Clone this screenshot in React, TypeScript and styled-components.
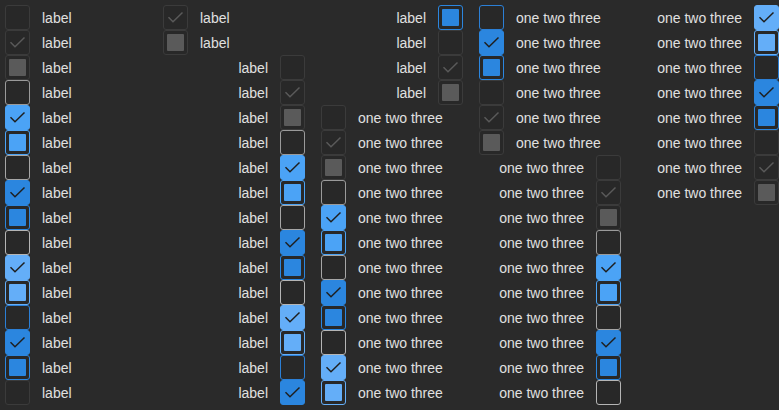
import React from "react";
import styled, { createGlobalStyle } from "styled-components";

const GlobalStyle = createGlobalStyle`
  html, body {
    margin: 0;
    padding: 0;
    background: #2a2a2a;
    overflow: hidden;
  }
`;

type Variant = "disabled" | "normal" | "hover" | "active" | "focus";
type State = "unchecked" | "checked" | "indeterminate";

const palette: Record<Variant, { border: string; fill: string; mark: string }> = {
  disabled: { border: "#3b3b3b", fill: "transparent", mark: "#5a5a5a" },
  normal: { border: "#9a9a9a", fill: "#4ba3f6", mark: "#1f1f1f" },
  hover: { border: "#a6a6a6", fill: "#2b86df", mark: "#1f1f1f" },
  active: { border: "#b5b5b5", fill: "#64aef8", mark: "#1f1f1f" },
  focus: { border: "#2b7fd6", fill: "#2b86df", mark: "#1f1f1f" },
};

const Grid = styled.div`
  display: flex;
  flex-direction: column;
  flex-wrap: wrap;
  align-content: flex-start;
  height: 400px;
  padding: 5px;
  column-gap: 16px;
  font-family: "Liberation Sans", Arial, sans-serif;
  font-size: 14px;
  color: #e0e0e0;
`;

const Item = styled.label<{ $reverse: boolean }>`
  display: flex;
  flex-direction: ${(p) => (p.$reverse ? "row-reverse" : "row")};
  align-items: center;
  gap: 12px;
  width: 142px;
  height: 25px;
`;

const Box = styled.span<{ $variant: Variant; $state: State }>`
  box-sizing: border-box;
  flex: none;
  width: 25px;
  height: 25px;
  border-radius: 3px;
  display: flex;
  align-items: center;
  justify-content: center;
  border: 1px solid
    ${(p) => {
      const c = palette[p.$variant];
      if (p.$variant === "disabled") return c.border;
      if (p.$state === "unchecked") return c.border;
      return c.fill;
    }};
  background: ${(p) =>
    p.$variant !== "disabled" && p.$state === "checked"
      ? palette[p.$variant].fill
      : "#282828"};
`;

const Square = styled.span<{ $color: string }>`
  width: 17px;
  height: 17px;
  border-radius: 1px;
  background: ${(p) => p.$color};
`;

const Text = styled.span`
  white-space: nowrap;
  line-height: 25px;
  padding-top: 2px;
`;

const Check = ({ color }: { color: string }) => (
  <svg width="25" height="25" viewBox="0 0 25 25" style={{ margin: -1 }}>
    <path
      d="M5.5 12.2 L10 16.7 L19.5 7.5"
      fill="none"
      stroke={color}
      strokeWidth={1.5}
    />
  </svg>
);

const CheckBox = ({ variant, state }: { variant: Variant; state: State }) => {
  const c = palette[variant];
  const indetColor = variant === "disabled" ? c.mark : c.fill;
  return (
    <Box $variant={variant} $state={state}>
      {state === "checked" && <Check color={c.mark} />}
      {state === "indeterminate" && <Square $color={indetColor} />}
    </Box>
  );
};

const groups = [
  { reverse: false, text: "label" },
  { reverse: true, text: "label" },
  { reverse: false, text: "one two three" },
  { reverse: true, text: "one two three" },
];
const sets: Variant[] = ["disabled", "normal", "hover", "active", "focus", "disabled"];
const states: State[] = ["unchecked", "checked", "indeterminate"];

export default function App() {
  const items: React.ReactNode[] = [];
  groups.forEach((g, gi) =>
    sets.forEach((v, si) =>
      states.forEach((s, ti) => {
        items.push(
          <Item key={`${gi}-${si}-${ti}`} $reverse={g.reverse}>
            <CheckBox variant={v} state={s} />
            <Text>{g.text}</Text>
          </Item>
        );
      })
    )
  );
  return (
    <>
      <GlobalStyle />
      <Grid>{items}</Grid>
    </>
  );
}
